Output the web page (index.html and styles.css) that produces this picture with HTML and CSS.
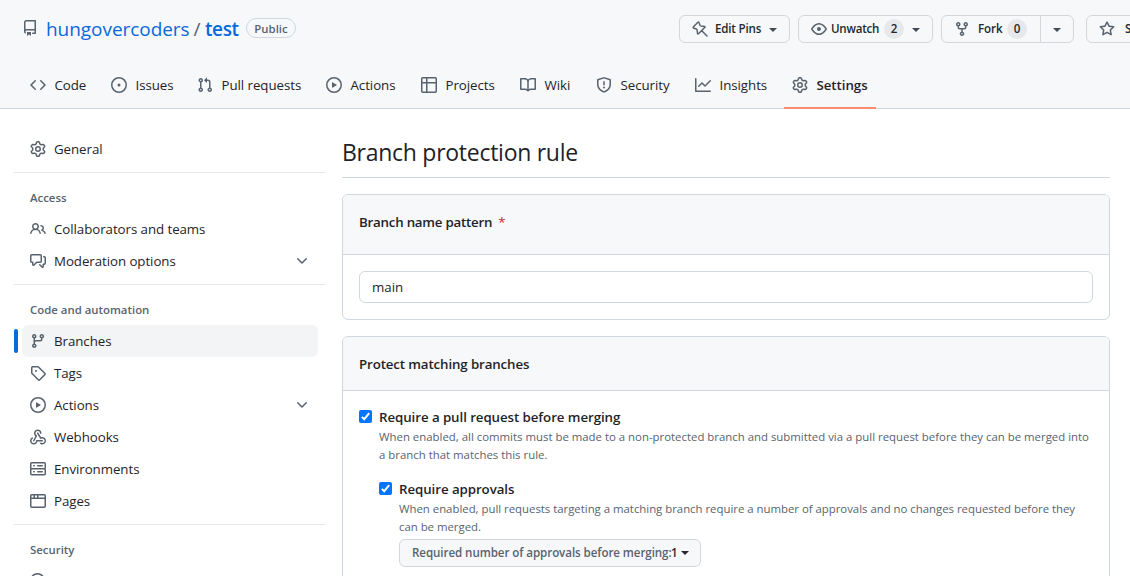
FILE: index.html
```html
<!DOCTYPE html>
<html lang="en">
<head>
<meta charset="utf-8">
<title>Branch protection rule</title>
<link rel="stylesheet" href="styles.css">
</head>
<body>
<svg class="sprite" aria-hidden="true">
  <symbol id="repo" viewBox="0 0 16 16"><path d="M2 2.5A2.5 2.5 0 0 1 4.5 0h8.75a.75.75 0 0 1 .75.75v12.5a.75.75 0 0 1-.75.75h-2.5a.75.75 0 0 1 0-1.5h1.75v-2h-8a1 1 0 0 0-.714 1.7.75.75 0 1 1-1.072 1.05A2.495 2.495 0 0 1 2 11.5Zm10.5-1h-8a1 1 0 0 0-1 1v6.708A2.486 2.486 0 0 1 4.5 9h8ZM5 12.25a.25.25 0 0 1 .25-.25h3.5a.25.25 0 0 1 .25.25v3.25a.25.25 0 0 1-.4.2l-1.45-1.087a.249.249 0 0 0-.3 0L5.4 15.7a.25.25 0 0 1-.4-.2Z"/></symbol>
  <symbol id="pin" viewBox="0 0 16 16"><path d="M5.9 1.3 1.3 5.9Q.8 6.5 1.5 7L4.3 8Q5 8.3 5.1 9L5.5 12.4Q5.7 13.4 6.5 12.7L12.7 6.5Q13.4 5.7 12.4 5.5L9 5.1Q8.3 5 8 4.3L7 1.5Q6.5.8 5.9 1.3ZM9.8 9.8 15 15" fill="none" stroke="#59636e" stroke-width="1.5" stroke-linecap="round"/></symbol>
  <symbol id="eye" viewBox="0 0 16 16"><path d="M8 2c1.981 0 3.671.992 4.933 2.078 1.27 1.091 2.187 2.345 2.637 3.023a1.62 1.62 0 0 1 0 1.798c-.45.678-1.367 1.932-2.637 3.023C11.67 13.008 9.981 14 8 14c-1.981 0-3.671-.992-4.933-2.078C1.797 10.83.88 9.576.43 8.898a1.62 1.62 0 0 1 0-1.798c.45-.677 1.367-1.931 2.637-3.022C4.33 2.992 6.019 2 8 2ZM1.679 7.932a.12.12 0 0 0 0 .136c.411.622 1.241 1.75 2.366 2.717C5.176 11.758 6.527 12.5 8 12.5c1.473 0 2.825-.742 3.955-1.715 1.124-.967 1.954-2.096 2.366-2.717a.12.12 0 0 0 0-.136c-.412-.621-1.242-1.75-2.366-2.717C10.824 4.242 9.473 3.5 8 3.5c-1.473 0-2.825.742-3.955 1.715-1.124.967-1.954 2.096-2.366 2.717ZM8 10a2 2 0 1 1-.001-3.999A2 2 0 0 1 8 10Z"/></symbol>
  <symbol id="fork" viewBox="0 0 16 16"><path d="M5 5.372v.878c0 .414.336.75.75.75h4.5a.75.75 0 0 0 .75-.75v-.878a2.25 2.25 0 1 1 1.5 0v.878a2.25 2.25 0 0 1-2.25 2.25h-1.5v2.128a2.251 2.251 0 1 1-1.5 0V8.5h-1.5A2.25 2.25 0 0 1 3.5 6.25v-.878a2.25 2.25 0 1 1 1.5 0ZM5 3.25a.75.75 0 1 0-1.5 0 .75.75 0 0 0 1.5 0Zm6.75.75a.75.75 0 1 0 0-1.5.75.75 0 0 0 0 1.5Zm-3 8.75a.75.75 0 1 0-1.5 0 .75.75 0 0 0 1.5 0Z"/></symbol>
  <symbol id="star" viewBox="0 0 16 16"><path d="M8 .25a.75.75 0 0 1 .673.418l1.882 3.815 4.21.612a.75.75 0 0 1 .416 1.279l-3.046 2.97.719 4.192a.751.751 0 0 1-1.088.791L8 12.347l-3.766 1.98a.75.75 0 0 1-1.088-.79l.72-4.194L.818 6.374a.75.75 0 0 1 .416-1.28l4.21-.611L7.327.668A.75.75 0 0 1 8 .25Zm0 2.445L6.615 5.5a.75.75 0 0 1-.564.41l-3.097.45 2.24 2.184a.75.75 0 0 1 .216.664l-.528 3.084 2.769-1.456a.75.75 0 0 1 .698 0l2.77 1.456-.53-3.084a.75.75 0 0 1 .216-.664l2.24-2.183-3.096-.45a.75.75 0 0 1-.564-.41Z"/></symbol>
  <symbol id="code" viewBox="0 0 16 16"><path d="m11.28 3.22 4.25 4.25a.75.75 0 0 1 0 1.06l-4.25 4.25a.749.749 0 1 1-1.06-1.06L13.94 8l-3.72-3.72a.749.749 0 1 1 1.06-1.06Zm-6.56 0a.751.751 0 0 1 1.06 1.06L2.06 8l3.72 3.72a.749.749 0 1 1-1.06 1.06L.47 8.53a.75.75 0 0 1 0-1.06Z"/></symbol>
  <symbol id="issue" viewBox="0 0 16 16"><path d="M8 9.5a1.5 1.5 0 1 0 0-3 1.5 1.5 0 0 0 0 3Z"/><path d="M8 0a8 8 0 1 1 0 16A8 8 0 0 1 8 0ZM1.5 8a6.5 6.5 0 1 0 13 0 6.5 6.5 0 0 0-13 0Z"/></symbol>
  <symbol id="pull" viewBox="0 0 16 16"><path d="M1.5 3.25a2.25 2.25 0 1 1 3 2.122v5.256a2.251 2.251 0 1 1-1.5 0V5.372A2.25 2.25 0 0 1 1.5 3.25Zm5.677-.177L9.573.677A.25.25 0 0 1 10 .854V2.5h1A2.5 2.5 0 0 1 13.5 5v5.628a2.251 2.251 0 1 1-1.5 0V5a1 1 0 0 0-1-1h-1v1.646a.25.25 0 0 1-.427.177L7.177 3.427a.25.25 0 0 1 0-.354ZM3.75 2.5a.75.75 0 1 0 0 1.5.75.75 0 0 0 0-1.5Zm0 9.5a.75.75 0 1 0 0 1.5.75.75 0 0 0 0-1.5Zm8.25.75a.75.75 0 1 0 1.5 0 .75.75 0 0 0-1.5 0Z"/></symbol>
  <symbol id="play" viewBox="0 0 16 16"><path d="M8 0a8 8 0 1 1 0 16A8 8 0 0 1 8 0ZM1.5 8a6.5 6.5 0 1 0 13 0 6.5 6.5 0 0 0-13 0Zm4.879-2.773 4.264 2.559a.25.25 0 0 1 0 .428l-4.264 2.559A.25.25 0 0 1 6 10.559V5.442a.25.25 0 0 1 .379-.215Z"/></symbol>
  <symbol id="table" viewBox="0 0 16 16"><path d="M0 1.75C0 .784.784 0 1.75 0h12.5C15.216 0 16 .784 16 1.75v12.5A1.75 1.75 0 0 1 14.25 16H1.75A1.75 1.75 0 0 1 0 14.25ZM6.5 6.5v8h7.75a.25.25 0 0 0 .25-.25V6.5Zm8-1.5V1.75a.25.25 0 0 0-.25-.25H6.5V5Zm-13 1.5v7.75c0 .138.112.25.25.25H5v-8ZM5 5V1.5H1.75a.25.25 0 0 0-.25.25V5Z"/></symbol>
  <symbol id="book" viewBox="0 0 16 16"><path d="M0 1.75A.75.75 0 0 1 .75 1h4.253c1.227 0 2.317.59 3 1.501A3.743 3.743 0 0 1 11.006 1h4.245a.75.75 0 0 1 .75.75v10.5a.75.75 0 0 1-.75.75h-4.507a2.25 2.25 0 0 0-1.591.659l-.622.621a.75.75 0 0 1-1.06 0l-.622-.621A2.25 2.25 0 0 0 5.258 13H.75a.75.75 0 0 1-.75-.75Zm7.251 10.324.004-5.073-.002-2.253A2.25 2.25 0 0 0 5.003 2.5H1.5v9h3.757a3.75 3.75 0 0 1 1.994.574ZM8.755 4.75l-.004 7.322a3.752 3.752 0 0 1 1.992-.572H14.5v-9h-3.495a2.25 2.25 0 0 0-2.25 2.25Z"/></symbol>
  <symbol id="shield" viewBox="0 0 16 16"><path d="M7.467.133a1.748 1.748 0 0 1 1.066 0l5.25 1.68A1.75 1.75 0 0 1 15 3.48V7c0 1.566-.32 3.182-1.303 4.682-.983 1.498-2.585 2.813-5.032 3.855a1.697 1.697 0 0 1-1.33 0c-2.447-1.042-4.049-2.357-5.032-3.855C1.32 10.182 1 8.566 1 7V3.48a1.75 1.75 0 0 1 1.217-1.667Zm.61 1.429a.25.25 0 0 0-.153 0l-5.25 1.68a.25.25 0 0 0-.174.238V7c0 1.358.275 2.666 1.057 3.86.784 1.194 2.121 2.34 4.366 3.297a.196.196 0 0 0 .154 0c2.245-.956 3.582-2.104 4.366-3.298C13.225 9.666 13.5 8.36 13.5 7V3.48a.251.251 0 0 0-.174-.237ZM8.75 4.75v3a.75.75 0 0 1-1.5 0v-3a.75.75 0 0 1 1.5 0ZM9 10.5a1 1 0 1 1-2 0 1 1 0 0 1 2 0Z"/></symbol>
  <symbol id="graph" viewBox="0 0 16 16"><path d="M1.5 1.75V13.5h13.75a.75.75 0 0 1 0 1.5H.75a.75.75 0 0 1-.75-.75V1.75a.75.75 0 0 1 1.5 0Zm14.28 2.53-5.25 5.25a.75.75 0 0 1-1.06 0L7 7.06 4.28 9.78a.751.751 0 0 1-1.06-1.06l3.25-3.25a.75.75 0 0 1 1.06 0L10 7.94l4.72-4.72a.751.751 0 0 1 1.06 1.06Z"/></symbol>
  <symbol id="gear" viewBox="0 0 16 16"><path d="M8 0a8.2 8.2 0 0 1 .701.031C9.444.095 9.99.645 10.16 1.29l.288 1.107c.018.066.079.158.212.224.231.114.454.243.668.386.123.082.233.09.299.071l1.103-.303c.644-.176 1.392.021 1.82.63.27.385.506.792.704 1.218.315.675.111 1.422-.364 1.891l-.814.806c-.049.048-.098.147-.088.294.016.257.016.515 0 .772-.01.147.038.246.088.294l.814.806c.475.469.679 1.216.364 1.891a7.977 7.977 0 0 1-.704 1.217c-.428.61-1.176.807-1.82.63l-1.102-.302c-.067-.019-.177-.011-.3.071a5.909 5.909 0 0 1-.668.386c-.133.066-.194.158-.211.224l-.29 1.106c-.168.646-.715 1.196-1.458 1.26a8.006 8.006 0 0 1-1.402 0c-.743-.064-1.289-.614-1.458-1.26l-.289-1.106c-.018-.066-.079-.158-.212-.224a5.738 5.738 0 0 1-.668-.386c-.123-.082-.233-.09-.299-.071l-1.103.303c-.644.176-1.392-.021-1.82-.63a8.12 8.12 0 0 1-.704-1.218c-.315-.675-.111-1.422.363-1.891l.815-.806c.05-.048.098-.147.088-.294a6.214 6.214 0 0 1 0-.772c.01-.147-.038-.246-.088-.294l-.815-.806C.635 6.045.431 5.298.746 4.623a7.92 7.92 0 0 1 .704-1.217c.428-.61 1.176-.807 1.82-.63l1.102.302c.067.019.177.011.3-.071.214-.143.437-.272.668-.386.133-.066.194-.158.211-.224l.29-1.106C6.009.645 6.556.095 7.299.03 7.53.01 7.764 0 8 0Zm-.571 1.525c-.036.003-.108.036-.137.146l-.289 1.105c-.147.561-.549.967-.998 1.189-.173.086-.34.183-.5.29-.417.278-.97.423-1.529.27l-1.103-.303c-.109-.03-.175.016-.195.045-.22.312-.412.644-.573.99-.014.031-.021.11.059.19l.815.806c.411.406.562.957.53 1.456a4.709 4.709 0 0 0 0 .582c.032.499-.119 1.05-.53 1.456l-.815.806c-.081.08-.073.159-.059.19.162.346.353.677.573.989.02.03.085.076.195.046l1.102-.303c.56-.153 1.113-.008 1.53.27.161.107.328.204.501.29.447.222.85.629.997 1.189l.289 1.105c.029.109.101.143.137.146a6.6 6.6 0 0 0 1.142 0c.036-.003.108-.036.137-.146l.289-1.105c.147-.561.549-.967.998-1.189.173-.086.34-.183.5-.29.417-.278.97-.423 1.529-.27l1.103.303c.109.029.175-.016.195-.045.22-.313.411-.644.573-.99.014-.031.021-.11-.059-.19l-.815-.806c-.411-.406-.562-.957-.53-1.456a4.709 4.709 0 0 0 0-.582c-.032-.499.119-1.05.53-1.456l.815-.806c.081-.08.073-.159.059-.19a6.464 6.464 0 0 0-.573-.989c-.02-.03-.085-.076-.195-.046l-1.102.303c-.56.153-1.113.008-1.53-.27a4.44 4.44 0 0 0-.501-.29c-.447-.222-.85-.629-.997-1.189l-.289-1.105c-.029-.11-.101-.143-.137-.146a6.6 6.6 0 0 0-1.142 0ZM11 8a3 3 0 1 1-6 0 3 3 0 0 1 6 0ZM9.5 8a1.5 1.5 0 1 0-3.001.001A1.5 1.5 0 0 0 9.5 8Z"/></symbol>
  <symbol id="people" viewBox="0 0 16 16"><path d="M2 5.5a3.5 3.5 0 1 1 5.898 2.549 5.508 5.508 0 0 1 3.034 4.084.75.75 0 1 1-1.482.235 4 4 0 0 0-7.9 0 .75.75 0 0 1-1.482-.236A5.507 5.507 0 0 1 3.102 8.05 3.493 3.493 0 0 1 2 5.5ZM11 4a3.001 3.001 0 0 1 2.22 5.018 5.01 5.01 0 0 1 2.56 3.012.749.749 0 0 1-.885.954.752.752 0 0 1-.549-.514 3.507 3.507 0 0 0-2.522-2.372.75.75 0 0 1-.574-.73v-.352a.75.75 0 0 1 .416-.672A1.5 1.5 0 0 0 11 5.5.75.75 0 0 1 11 4Zm-5.5-.5a2 2 0 1 0-.001 3.999A2 2 0 0 0 5.5 3.5Z"/></symbol>
  <symbol id="discuss" viewBox="0 0 16 16"><path d="M1.75 1h8.5c.966 0 1.75.784 1.75 1.75v5.5A1.75 1.75 0 0 1 10.25 10H7.061l-2.574 2.573A1.458 1.458 0 0 1 2 11.543V10h-.25A1.75 1.75 0 0 1 0 8.25v-5.5C0 1.784.784 1 1.75 1ZM1.5 2.75v5.5c0 .138.112.25.25.25h1a.75.75 0 0 1 .75.75v2.19l2.72-2.72a.749.749 0 0 1 .53-.22h3.5a.25.25 0 0 0 .25-.25v-5.5a.25.25 0 0 0-.25-.25h-8.5a.25.25 0 0 0-.25.25Zm13 2a.25.25 0 0 0-.25-.25h-.5a.75.75 0 0 1 0-1.5h.5c.966 0 1.75.784 1.75 1.75v5.5A1.75 1.75 0 0 1 14.25 12H14v1.543a1.458 1.458 0 0 1-2.487 1.03L9.22 12.28a.749.749 0 1 1 1.06-1.06l2.22 2.22v-2.19a.75.75 0 0 1 .75-.75h1a.25.25 0 0 0 .25-.25Z"/></symbol>
  <symbol id="branch" viewBox="0 0 16 16"><path d="M9.5 3.25a2.25 2.25 0 1 1 3 2.122V6A2.5 2.5 0 0 1 10 8.5H6a1 1 0 0 0-1 1v1.128a2.251 2.251 0 1 1-1.5 0V5.372a2.25 2.25 0 1 1 1.5 0v1.836A2.493 2.493 0 0 1 6 7h4a1 1 0 0 0 1-1v-.628A2.25 2.25 0 0 1 9.5 3.25Zm-6 0a.75.75 0 1 0 1.5 0 .75.75 0 0 0-1.5 0Zm8.25-.75a.75.75 0 1 0 0 1.5.75.75 0 0 0 0-1.5ZM4.25 12a.75.75 0 1 0 0 1.5.75.75 0 0 0 0-1.5Z"/></symbol>
  <symbol id="tag" viewBox="0 0 16 16"><path d="M1 7.775V2.75C1 1.784 1.784 1 2.75 1h5.025c.464 0 .91.184 1.238.513l6.25 6.25a1.75 1.75 0 0 1 0 2.474l-5.026 5.026a1.75 1.75 0 0 1-2.474 0l-6.25-6.25A1.752 1.752 0 0 1 1 7.775Zm1.5 0c0 .066.026.13.073.177l6.25 6.25a.25.25 0 0 0 .354 0l5.025-5.025a.25.25 0 0 0 0-.354l-6.25-6.25a.25.25 0 0 0-.177-.073H2.75a.25.25 0 0 0-.25.25ZM6 5a1 1 0 1 1 0 2 1 1 0 0 1 0-2Z"/></symbol>
  <symbol id="webhook" viewBox="0 0 16 16"><path d="M5.5 4.25a2.25 2.25 0 0 1 4.5 0 .75.75 0 0 0 1.5 0 3.75 3.75 0 1 0-6.14 2.889l-2.272 4.258a.75.75 0 0 0 1.324.706L7 7.25a.75.75 0 0 0-.309-1.015A2.25 2.25 0 0 1 5.5 4.25Z"/><path d="M7.364 3.607a.75.75 0 0 1 1.03.257l2.608 4.349a3.75 3.75 0 1 1-.628 6.785.75.75 0 0 1 .752-1.299 2.25 2.25 0 1 0-.033-3.88.75.75 0 0 1-1.03-.256L7.107 4.636a.75.75 0 0 1 .257-1.03Z"/><path d="M2.9 8.776A.75.75 0 0 1 2.625 9.8 2.25 2.25 0 1 0 6 11.75a.75.75 0 0 1 .75-.751h5.5a.75.75 0 0 1 0 1.5H7.425a3.751 3.751 0 1 1-5.55-3.998.75.75 0 0 1 1.024.274Z"/></symbol>
  <symbol id="server" viewBox="0 0 16 16"><path d="M1.75 1h12.5c.966 0 1.75.784 1.75 1.75v4c0 .372-.116.717-.314 1 .198.283.314.628.314 1v4a1.75 1.75 0 0 1-1.75 1.75H1.75A1.75 1.75 0 0 1 0 12.75v-4c0-.358.109-.707.314-1a1.739 1.739 0 0 1-.314-1v-4C0 1.784.784 1 1.75 1ZM1.5 2.75v4c0 .138.112.25.25.25h12.5a.25.25 0 0 0 .25-.25v-4a.25.25 0 0 0-.25-.25H1.75a.25.25 0 0 0-.25.25Zm.25 5.75a.25.25 0 0 0-.25.25v4c0 .138.112.25.25.25h12.5a.25.25 0 0 0 .25-.25v-4a.25.25 0 0 0-.25-.25ZM7 4.75A.75.75 0 0 1 7.75 4h4.5a.75.75 0 0 1 0 1.5h-4.5A.75.75 0 0 1 7 4.75ZM7.75 10h4.5a.75.75 0 0 1 0 1.5h-4.5a.75.75 0 0 1 0-1.5ZM3 4.75A.75.75 0 0 1 3.75 4h.5a.75.75 0 0 1 0 1.5h-.5A.75.75 0 0 1 3 4.75ZM3.75 10h.5a.75.75 0 0 1 0 1.5h-.5a.75.75 0 0 1 0-1.5Z"/></symbol>
  <symbol id="browser" viewBox="0 0 16 16"><path d="M0 2.75C0 1.784.784 1 1.75 1h12.5c.966 0 1.75.784 1.75 1.75v10.5A1.75 1.75 0 0 1 14.25 15H1.75A1.75 1.75 0 0 1 0 13.25ZM14.5 6h-13v7.25c0 .138.112.25.25.25h12.5a.25.25 0 0 0 .25-.25Zm-6-3.5v2h6V2.75a.25.25 0 0 0-.25-.25ZM5 2.5v2h2v-2Zm-3.25 0a.25.25 0 0 0-.25.25V4.5h2v-2Z"/></symbol>
  <symbol id="chevron" viewBox="0 0 16 16"><path d="M12.78 5.22a.749.749 0 0 1 0 1.06l-4.25 4.25a.749.749 0 0 1-1.06 0L3.22 6.28a.749.749 0 1 1 1.06-1.06L8 8.939l3.72-3.719a.749.749 0 0 1 1.06 0Z"/></symbol>
  <symbol id="codescan" viewBox="0 0 16 16"><path d="M7.5 0a7.5 7.5 0 0 1 5.807 12.247l2.473 2.473a.749.749 0 1 1-1.06 1.06l-2.473-2.473A7.5 7.5 0 1 1 7.5 0Zm-6 7.5a6 6 0 1 0 12 0 6 6 0 1 0-12 0Z"/></symbol>
  <symbol id="check" viewBox="0 0 13 13"><path d="M2.9 6.9 5.2 9.2 10.2 3.2" fill="none" stroke="#fff" stroke-width="2"/></symbol>
</svg>

<header class="header">
  <div class="titlebar">
    <svg class="icon repo-icon"><use href="#repo"/></svg>
    <a class="owner">hungovercoders</a><span class="slash">/</span><a class="repo">test</a>
    <span class="visibility">Public</span>
    <div class="actions">
      <button class="btn btn-pins"><svg class="icon pin"><use href="#pin"/></svg><span>Edit Pins</span><i class="caret"></i></button>
      <button class="btn btn-watch"><svg class="icon"><use href="#eye"/></svg><span>Unwatch</span><b class="count">2</b><i class="caret"></i></button>
      <div class="group">
        <button class="btn btn-fork"><svg class="icon"><use href="#fork"/></svg><span>Fork</span><b class="count">0</b></button>
        <button class="btn btn-more"><i class="caret"></i></button>
      </div>
      <button class="btn btn-star"><svg class="icon"><use href="#star"/></svg><span>Star</span></button>
    </div>
  </div>
  <nav class="tabs">
    <a class="tab"><svg class="icon"><use href="#code"/></svg><span>Code</span></a>
    <a class="tab"><svg class="icon"><use href="#issue"/></svg><span>Issues</span></a>
    <a class="tab"><svg class="icon"><use href="#pull"/></svg><span>Pull requests</span></a>
    <a class="tab"><svg class="icon"><use href="#play"/></svg><span>Actions</span></a>
    <a class="tab"><svg class="icon"><use href="#table"/></svg><span>Projects</span></a>
    <a class="tab"><svg class="icon"><use href="#book"/></svg><span>Wiki</span></a>
    <a class="tab"><svg class="icon"><use href="#shield"/></svg><span>Security</span></a>
    <a class="tab"><svg class="icon"><use href="#graph"/></svg><span>Insights</span></a>
    <a class="tab tab-current"><svg class="icon"><use href="#gear"/></svg><span>Settings</span></a>
  </nav>
</header>

<div class="layout">
  <aside class="sidebar">
    <a class="item"><svg class="icon"><use href="#gear"/></svg><span>General</span></a>
    <section class="section">
      <h2 class="section-title">Access</h2>
      <a class="item"><svg class="icon"><use href="#people"/></svg><span>Collaborators and teams</span></a>
      <a class="item"><svg class="icon"><use href="#discuss"/></svg><span>Moderation options</span><svg class="icon chevron"><use href="#chevron"/></svg></a>
    </section>
    <section class="section">
      <h2 class="section-title">Code and automation</h2>
      <a class="item item-current"><svg class="icon"><use href="#branch"/></svg><span>Branches</span></a>
      <a class="item"><svg class="icon"><use href="#tag"/></svg><span>Tags</span></a>
      <a class="item"><svg class="icon"><use href="#play"/></svg><span>Actions</span><svg class="icon chevron"><use href="#chevron"/></svg></a>
      <a class="item"><svg class="icon"><use href="#webhook"/></svg><span>Webhooks</span></a>
      <a class="item"><svg class="icon"><use href="#server"/></svg><span>Environments</span></a>
      <a class="item"><svg class="icon"><use href="#browser"/></svg><span>Pages</span></a>
    </section>
    <section class="section">
      <h2 class="section-title">Security</h2>
      <a class="item"><svg class="icon"><use href="#codescan"/></svg></a>
    </section>
  </aside>

  <main class="main">
    <h1 class="page-title">Branch protection rule</h1>
    <section class="box">
      <div class="box-head box-head-tall">Branch name pattern<span class="required">*</span></div>
      <div class="box-body"><input class="field" type="text" value="main"></div>
    </section>
    <section class="box">
      <div class="box-head">Protect matching branches</div>
      <div class="rules">
        <div class="rule">
          <svg class="checkbox"><use href="#check"/></svg>
          <div class="rule-text">
            <h3 class="rule-title">Require a pull request before merging</h3>
            <p class="note">When enabled, all commits must be made to a non-protected branch and submitted via a pull request before they can be merged into<br>a branch that matches this rule.</p>
          </div>
        </div>
        <div class="rule rule-nested">
          <svg class="checkbox"><use href="#check"/></svg>
          <div class="rule-text">
            <h3 class="rule-title">Require approvals</h3>
            <p class="note">When enabled, pull requests targeting a matching branch require a number of approvals and no changes requested before they<br>can be merged.</p>
            <button class="btn btn-approvals"><span class="muted">Required number of approvals before merging:</span><span>1</span><i class="caret"></i></button>
          </div>
        </div>
      </div>
    </section>
  </main>
</div>
</body>
</html>
```
FILE: styles.css
```css
* { box-sizing: border-box; }
body {
  margin: 0;
  height: 576px;
  overflow: hidden;
  background: #fff;
  color: #1f2328;
  font: 13.3px/20px "Open Sans", "Noto Sans", sans-serif;
}
h1, h2, h3, p { margin: 0; }
.sprite { display: none; }
.icon { width: 16px; height: 16px; flex: none; fill: #59636e; }

.header { height: 109px; background: #f6f8fa; border-bottom: 1px solid #d0d7de; }
.titlebar { display: flex; height: 61px; padding: 14px 0 0 22px; white-space: nowrap; }
.titlebar > * { flex: none; }
.repo-icon { margin: 6px 8px 0 0; }
.owner, .slash, .repo { font-size: 19px; line-height: 30px; color: #0969da; }
.owner { width: 143px; letter-spacing: -0.05px; }
.slash { width: 16px; text-align: center; color: #59636e; }
.repo { width: 34px; font-weight: 600; letter-spacing: -0.4px; }
.visibility {
  width: 50px; height: 20px; margin: 4px 0 0 7px;
  border: 1px solid #d0d7de; border-radius: 10px;
  text-align: center; font-size: 11.4px; line-height: 19px; font-weight: 550; color: #59636e;
}
.actions { display: flex; margin: 1px 0 0 383px; }
.btn {
  display: flex; align-items: center; flex: none; height: 28px; padding: 0 11px;
  border: 1px solid #d3d7db; border-radius: 6px; background: #f6f8fa;
  color: #24292f; font: 550 11.6px/20px "Open Sans", sans-serif; text-align: left; white-space: nowrap;
}
.btn > * { flex: none; }
.btn span { letter-spacing: -0.1px; }
.caret { border: 4px solid transparent; border-top-color: #424a53; border-bottom: 0; margin-top: 2px; }
.btn-pins { width: 111px; margin-right: 8px; padding-left: 12px; }
.btn-pins span { width: 54px; letter-spacing: -0.2px; }
.pin { margin-right: 7px; }
.btn-watch { width: 135px; margin-right: 8px; padding-left: 12px; }
.btn-watch span { width: 53px; margin-left: 4px; letter-spacing: -0.25px; }
.btn-watch .caret { margin-left: 8px; }
.count {
  width: 20px; height: 20px; border-radius: 10px; background: #e6e8eb;
  font-weight: 550; text-align: center; line-height: 20px;
}
.group { display: flex; margin-right: 12px; }
.btn-fork { width: 100px; padding-left: 12px; border-radius: 6px 0 0 6px; }
.btn-fork span { width: 29px; margin-left: 8px; }
.btn-more { width: 34px; margin-left: -1px; padding: 0 12px; border-radius: 0 6px 6px 0; }
.btn-star { width: 90px; padding-left: 12px; }
.btn-star span { margin-left: 10px; }

.tabs {
  display: grid; height: 48px; padding-left: 22px;
  grid-template-columns: 81px 86px 129px 95px 99px 76px 99px 97px 92px;
}
.tab { display: flex; align-items: center; gap: 8.5px; padding-left: 8px; white-space: nowrap; letter-spacing: -0.05px; }
.tab-current { font-weight: 600; box-shadow: inset 0 -2px #fd8c73; }

.layout { display: grid; grid-template-columns: 342px 768px; }
.sidebar { padding: 24px 16px 0 14px; }
.item {
  display: flex; align-items: center; gap: 8px; height: 32px;
  margin: 0 8px; padding: 0 8px; border-radius: 6px; letter-spacing: -0.06px;
}
.chevron { margin-left: auto; }
.item-current { position: relative; background: #f3f4f6; }
.item-current::before {
  content: ""; position: absolute; left: -8px; top: 4px;
  width: 4px; height: 24px; border-radius: 6px; background: #0969da;
}
.section { margin-top: 7px; padding-top: 8px; border-top: 1px solid #e4e8ec; }
.section-title { height: 32px; padding-left: 16px; font-size: 11.4px; line-height: 34px; font-weight: 550; color: #59636e; }

.main { padding-top: 24px; }
.page-title { height: 45px; border-bottom: 1px solid #d0d7de; font-size: 23px; line-height: 39px; font-weight: 400; letter-spacing: -0.27px; }
.box { margin-top: 16px; border: 1px solid #d0d7de; border-radius: 6px; overflow: hidden; }
.box-head { height: 54px; padding: 17px 16px 0; border-bottom: 1px solid #d0d7de; background: #f6f8fa; font-weight: 600; letter-spacing: -0.12px; }
.box-head-tall { height: 60px; letter-spacing: -0.22px; }
.required { margin-left: 6px; color: #cf222e; font-weight: 400; }
.box-body { padding: 16px; }
.field {
  display: block; width: 100%; height: 32px; padding: 0 12px;
  border: 1px solid #d0d7de; border-radius: 6px; color: #1f2328; font: inherit;
}
.rules { height: 210px; padding: 16px 0 0 16px; }
.rule { display: flex; gap: 7px; }
.rule-nested { margin: 15px 0 0 20px; }
.checkbox { flex: none; width: 13px; height: 13px; margin-top: 3px; border-radius: 2px; background: #0075ff; }
.rule-title { font-size: 13.3px; line-height: 20px; font-weight: 600; margin-bottom: 1px; letter-spacing: -0.07px; }
.note { font-size: 11.4px; line-height: 18px; color: #59636e; white-space: nowrap; }
.rule-nested .note { letter-spacing: -0.015px; }
.btn-approvals { width: 302px; margin-top: 3px; padding-left: 12px; }
.btn-approvals .muted { width: 259px; color: #59636e; letter-spacing: -0.08px; }
.btn-approvals .caret { margin: 0 0 0 3px; border-top-color: #24292f; }
```
